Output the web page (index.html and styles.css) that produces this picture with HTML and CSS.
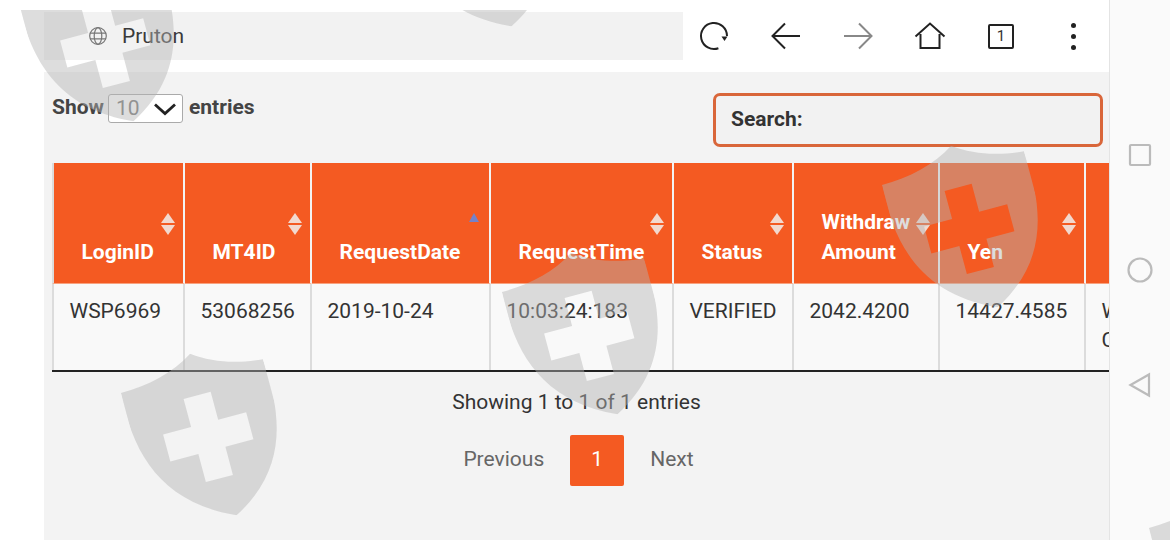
FILE: index.html
```html
<!DOCTYPE html>
<html lang="en">

<head>
    <meta charset="UTF-8">
    <meta name="viewport" content="width=device-width, initial-scale=1.0">
    <title>Pruton</title>
    <link rel="stylesheet" href="styles.css">
</head>

<body>

    <div class="screen">
        <div class="browser">
            <div class="topbar">
                <div class="address">
                    <svg class="globe" viewBox="0 0 20 20" width="20" height="20">
                        <circle cx="10" cy="10" r="8.3" />
                        <ellipse cx="10" cy="10" rx="3.8" ry="8.3" />
                        <path d="M2 7.2h16M2 12.8h16" />
                    </svg>
                    <span>Pruton</span>
                </div>
                <div class="tools">
                    <svg class="tool" viewBox="0 0 32 32" width="32" height="32">
                        <path d="M20.400 28.200A13 13 0 1 1 29 16" />
                        <path class="solid" d="M23.500 16.500h6l-3 4.500z" />
                    </svg>
                    <svg class="tool" viewBox="0 0 32 32" width="32" height="32">
                        <path d="M30 16H3M15 3.500 2.500 16 15 28.500" />
                    </svg>
                    <svg class="tool faded" viewBox="0 0 32 32" width="32" height="32">
                        <path d="M2 16h27M17 3.500 29.500 16 17 28.500" />
                    </svg>
                    <svg class="tool" viewBox="0 0 32 32" width="32" height="32">
                        <path d="M1.500 16.500 16 3.500l14.500 13M6.500 14v14h19V14" />
                    </svg>
                    <div class="tabs">1</div>
                    <div class="dots"><i></i><i></i><i></i></div>
                </div>
            </div>

            <div class="page">
                <div class="controls">
                    <div class="length">
                        <span>Show</span>
                        <div class="select">
                            <span>10</span>
                            <svg viewBox="0 0 24 14" width="24" height="14">
                                <path d="M2 2.500 12 11.500 22 2.500" />
                            </svg>
                        </div>
                        <span>entries</span>
                    </div>
                    <div class="search">Search:</div>
                </div>

                <div class="table-wrap">
                    <table>
                        <thead>
                            <tr>
                                <th class="col-login">LoginID<span class="sort"></span></th>
                                <th class="col-mt4">MT4ID<span class="sort"></span></th>
                                <th class="col-date">RequestDate<span class="sort asc"></span></th>
                                <th class="col-time">RequestTime<span class="sort"></span></th>
                                <th class="col-status">Status<span class="sort"></span></th>
                                <th class="col-amount">Withdraw<br>Amount<span class="sort"></span></th>
                                <th class="col-yen">Yen<span class="sort"></span></th>
                                <th class="col-last"></th>
                            </tr>
                        </thead>
                        <tbody>
                            <tr>
                                <td>WSP6969</td>
                                <td>53068256</td>
                                <td>2019-10-24</td>
                                <td>10:03:24:183</td>
                                <td>VERIFIED</td>
                                <td>2042.4200</td>
                                <td>14427.4585</td>
                                <td>Withdraw<br>Completed</td>
                            </tr>
                        </tbody>
                    </table>
                </div>

                <div class="info">Showing 1 to 1 of 1 entries</div>
                <div class="paging">
                    <span class="page-link">Previous</span>
                    <span class="page-num">1</span>
                    <span class="page-link">Next</span>
                </div>
            </div>
        </div>

        <div class="navbar">
            <svg viewBox="0 0 26 26" width="26" height="26">
                <rect x="3" y="3" width="20" height="20" rx="1" />
            </svg>
            <svg viewBox="0 0 26 26" width="26" height="26">
                <circle cx="13" cy="13" r="11.500" />
            </svg>
            <svg viewBox="0 0 26 26" width="26" height="26">
                <path d="M3.500 13 22 2.500v21z" />
            </svg>
        </div>

        <div class="watermarks">
            <svg class="shield wm-1" viewBox="0 0 146 168"><use href="#shield" /></svg>
            <svg class="shield wm-2" viewBox="0 0 146 168"><use href="#shield" /></svg>
            <svg class="shield wm-3" viewBox="0 0 146 168"><use href="#shield" /></svg>
            <svg class="shield wm-4" viewBox="0 0 146 168"><use href="#shield" /></svg>
            <svg class="shield wm-5" viewBox="0 0 146 168"><use href="#shield" /></svg>
            <svg class="shield wm-6" viewBox="0 0 146 168"><use href="#shield" /></svg>
        </div>
    </div>

    <svg class="defs" width="0" height="0">
        <defs>
            <path id="shield" fill-rule="evenodd"
                d="M77 0C96 14 120 22 146 24 150 82 142 136 80 168 10 136-4 82 0 20 28 20 56 14 77 0ZM59 42V71H30V99H59V128H87V99H116V71H87V42Z" />
        </defs>
    </svg>

</body>

</html>
```

FILE: styles.css
```css
* {
    box-sizing: border-box;
}

body {
    margin: 0;
    background-color: #fff;
    font-family: Roboto, "Liberation Sans", sans-serif;
    color: #333;
    font-size: 21px;
}

.screen {
    position: relative;
    display: flex;
    width: 1170px;
    height: 540px;
    overflow: hidden;
}

.browser {
    width: 1109px;
    display: flex;
    flex-direction: column;
}

/* top bar */
.topbar {
    height: 72px;
    padding: 12px 0 12px 44px;
    display: flex;
}

.address {
    width: 639px;
    background-color: #f2f2f2;
    display: flex;
    align-items: center;
    gap: 14px;
    padding-left: 44px;
    color: #3a3a3a;
}

.globe {
    fill: none;
    stroke: #777;
    stroke-width: 1.2;
}

.tools {
    display: flex;
    align-items: center;
    margin-left: 15px;
    gap: 40px;
}

.tool {
    fill: none;
    stroke: #222;
    stroke-width: 2;
}

.tool .solid {
    fill: #222;
    stroke: none;
}

.tool.faded {
    stroke: #888;
}

.tabs {
    width: 26px;
    height: 25px;
    margin: 0 4px 0 2px;
    border: 2px solid #222;
    border-radius: 2px;
    font-size: 15px;
    line-height: 21px;
    text-align: center;
}

.dots {
    width: 30px;
    height: 27px;
    display: flex;
    flex-direction: column;
    justify-content: space-between;
    align-items: center;
}

.dots i {
    width: 5px;
    height: 5px;
    border-radius: 50%;
    background-color: #222;
}

/* page */
.page {
    flex: 1;
    margin-left: 44px;
    padding-left: 8px;
    background-color: #f3f3f3;
}

.controls {
    height: 91px;
    display: flex;
    justify-content: space-between;
    align-items: flex-start;
    padding: 21px 6px 0 0;
    font-weight: 700;
}

.length {
    display: flex;
    align-items: flex-start;
    gap: 5px;
    margin-top: 1px;
    line-height: 27px;
    color: #444;
}

.select {
    width: 75px;
    height: 29px;
    margin: 0 1px 0 -1px;
    background-color: #fff;
    border: 1px solid #aaa;
    border-radius: 3px;
    display: flex;
    align-items: center;
    justify-content: space-between;
    padding: 0 5px 0 7px;
    font-weight: 400;
    color: #777;
}

.select svg {
    fill: none;
    stroke: #222;
    stroke-width: 2.800;
}

.search {
    width: 390px;
    height: 54px;
    border: 3px solid #d9663a;
    border-radius: 7px;
    background-color: #f2f2f2;
    padding-left: 15px;
    line-height: 47px;
    color: #333;
}

/* table */
.table-wrap {
    overflow: hidden;
    border-bottom: 2px solid #222;
    height: 209px;
}

table {
    table-layout: fixed;
    width: 1180px;
    border-collapse: separate;
    border-spacing: 0;
}

th {
    position: relative;
    height: 121px;
    padding: 0 0 16px 27.500px;
    background-color: #f45a22;
    color: #fff;
    text-align: left;
    vertical-align: bottom;
    line-height: 30px;
    border-right: 2px solid #f3f3f3;
    border-bottom: 1px solid #f8a27f;
}

td {
    height: 86px;
    padding: 13px 0 0 15.500px;
    background-color: #f9f9f9;
    vertical-align: top;
    line-height: 29px;
    border-right: 2px solid #dcdcdc;
}

th:first-child,
td:first-child {
    border-left: 2px solid #dcdcdc;
}

.col-login { width: 133px; }
.col-mt4 { width: 127px; }
.col-date { width: 179px; }
.col-time { width: 183px; }
.col-status { width: 120px; }
.col-amount { width: 146px; }
.col-yen { width: 146px; }

.sort {
    position: absolute;
    top: 50px;
    right: 8px;
    width: 14px;
    height: 22px;
}

.sort::before,
.sort::after {
    content: "";
    position: absolute;
    left: 0;
    border-left: 7px solid transparent;
    border-right: 7px solid transparent;
}

.sort::before {
    top: 0;
    border-bottom: 10px solid #f2d9cf;
}

.sort::after {
    bottom: 0;
    border-top: 10px solid #f2d9cf;
}

.sort.asc::before {
    left: 2px;
    border-left-width: 5px;
    border-right-width: 5px;
    border-bottom: 9px solid #7482c9;
}

.sort.asc::after {
    display: none;
}

/* paging */
.info {
    margin-top: 18px;
    padding-right: 8px;
    text-align: center;
    line-height: 24px;
}

.paging {
    margin-top: 21px;
    display: flex;
    justify-content: center;
    align-items: center;
    gap: 26px;
    padding-right: 4px;
    color: #666;
}

.page-link {
    padding-bottom: 3px;
}

.page-num {
    width: 54px;
    height: 51px;
    background-color: #f45a22;
    border-radius: 2px;
    color: #fff;
    text-align: center;
    line-height: 49px;
}

/* android nav */
.navbar {
    width: 61px;
    background-color: #fafafa;
    border-left: 1px solid #e4e4e4;
    display: flex;
    flex-direction: column;
    align-items: center;
    padding-top: 142px;
    gap: 89px;
}

.navbar svg {
    fill: none;
    stroke: #bbb;
    stroke-width: 2.200;
}

/* shields over everything */
.watermarks {
    position: absolute;
    top: 10px;
    left: 0;
    width: 1170px;
    height: 530px;
    overflow: hidden;
    pointer-events: none;
}

.shield {
    position: absolute;
    width: 146px;
    height: 168px;
    fill: rgba(180, 180, 180, 0.45);
    transform: rotate(-15deg);
}

.wm-1 { left: 32px; top: -52px; }
.wm-2 { left: 410px; top: -147px; }
.wm-3 { left: 135px; top: 342px; }
.wm-4 { left: 516px; top: 241px; }
.wm-5 { left: 896px; top: 134px; }
.wm-6 { left: 1163px; top: 477px; }

.defs {
    position: absolute;
}
```
